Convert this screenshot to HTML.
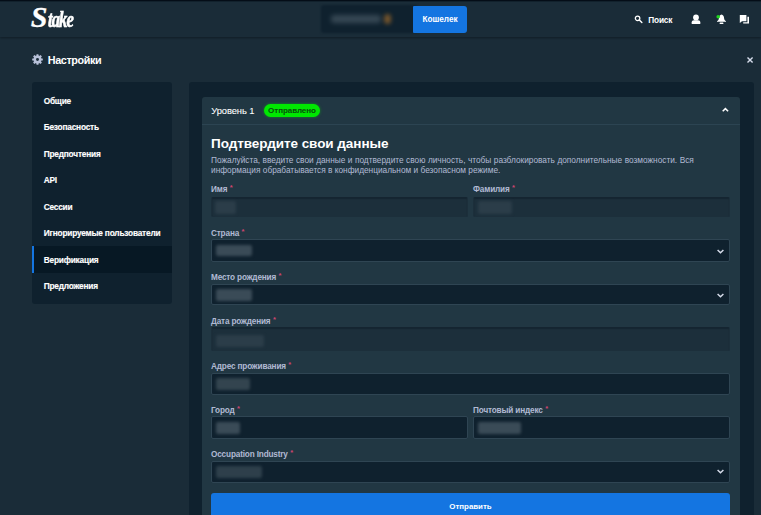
<!DOCTYPE html>
<html lang="ru">
<head>
<meta charset="utf-8">
<title>Stake</title>
<style>
*{box-sizing:border-box;margin:0;padding:0}
html,body{width:761px;height:515px;overflow:hidden;background:#1a2c38}
body{font-family:"Liberation Sans",sans-serif;color:#fff;position:relative}
.abs{position:absolute}
.t{white-space:nowrap}
.topline{left:0;top:0;width:761px;height:1px;background:#040d17;box-shadow:0 1px 0 rgba(4,13,23,.35)}
.header{left:0;top:0;width:761px;height:37px;background:#1a2c38;box-shadow:0 1px 2px rgba(5,12,18,.45)}
.logo{left:32px;top:0;height:36px;color:#fff;font-family:"Liberation Serif",serif;font-style:italic;font-weight:bold}
.balance{left:321px;top:5px;width:96px;height:28px;background:#0f212e;border-radius:3px 0 0 3px;filter:blur(1.2px)}
.wallet{left:413px;top:5.5px;width:54px;height:27.5px;background:#1475e1;border-radius:1px 3px 3px 1px;font-weight:bold;font-size:8.2px;line-height:28.4px;text-align:center;color:#fff}
.side{left:32px;top:81.5px;width:140px;height:222px;background:#0f212e;border-radius:3px}
.si{left:43.7px;font-weight:bold;font-size:8.3px;letter-spacing:-.2px;line-height:12px;color:#fff;-webkit-text-stroke:.15px #fff}
.card{left:188.6px;top:81.5px;width:565.9px;height:450px;background:#0f212e;border-radius:3px 3px 0 0}
.panel{left:201.5px;top:97.3px;width:538.8px;height:430px;background:#213743;border-radius:3px 3px 0 0}
.phead{left:201.5px;top:97.3px;width:538.8px;height:27.5px;border-bottom:1px solid #2c4452;border-radius:3px 3px 0 0}
.lbl{font-size:8.2px;letter-spacing:-.15px;line-height:12px;color:#b1bad3;font-weight:bold}
.lbl i{font-style:normal;color:#cf4570;margin-left:.3px;font-size:7.6px;position:relative;top:-1.8px}
.inp{background:#0f212e;border:1px solid #2f4553;border-radius:2px}
.inp.dis{background:#1c2f3b;border-color:#1c2f3b;border-top-color:#152531;box-shadow:inset 0 1px 1px rgba(8,18,28,.3)}
.bl{filter:blur(1.6px);border-radius:2px}
</style>
</head>
<body>
<div class="abs header"></div>
<div class="abs topline"></div>
<div class="abs logo t"><span style="position:absolute;left:-1.2px;top:2.3px;font-size:30px;line-height:30px;-webkit-text-stroke:.3px #fff">S</span><span style="position:absolute;left:16.3px;top:8.7px;font-size:24px;line-height:21px;letter-spacing:-1.3px;transform:scaleX(.69);transform-origin:0 0;-webkit-text-stroke:.7px #fff">take</span></div>
<div class="abs balance"></div>
<div class="abs" style="left:331px;top:14.5px;width:50px;height:8px;background:#51626e;opacity:.6;border-radius:3px;filter:blur(2.5px)"></div>
<div class="abs" style="left:383.5px;top:13.5px;width:7.5px;height:10px;background:#b8772b;opacity:.6;border-radius:5px;filter:blur(2px)"></div>
<div class="abs wallet t">Кошелек</div>
<svg class="abs" style="left:634.4px;top:15.2px" width="9" height="8.4" viewBox="0 0 10 10"><circle cx="3.9" cy="3.9" r="2.7" fill="none" stroke="#fff" stroke-width="1.5"/><path d="M6 6 L9 9" stroke="#fff" stroke-width="1.7" stroke-linecap="round"/></svg>
<div class="abs t" style="left:648.2px;top:14.1px;font-weight:bold;font-size:8.3px;letter-spacing:-.15px;line-height:12px">Поиск</div>
<svg class="abs" style="left:691px;top:14px" width="10" height="10" viewBox="0 0 10 10"><circle cx="5" cy="3.5" r="2.9" fill="#fff"/><path d="M0.7 10 V8.3 C0.7 7 1.6 6.3 2.9 6.3 H7.1 C8.4 6.3 9.3 7 9.3 8.3 V10 Z" fill="#fff"/></svg>
<svg class="abs" style="left:715px;top:13px" width="12" height="12" viewBox="0 0 12 12"><path d="M6.5 1.6 C4.9 1.9 4 3.4 3.9 5.2 C3.8 6.8 3.1 7.6 2 8.1 L2 8.8 L11 8.8 L11 8.1 C9.9 7.6 9.2 6.8 9.1 5.2 C9 3.4 8.1 1.9 6.5 1.6 Z" fill="#fff"/><rect x="4.6" y="9.6" width="3.8" height="1.5" rx=".5" fill="#fff"/><circle cx="3.2" cy="3.7" r="1.8" fill="#1fd51f"/></svg>
<svg class="abs" style="left:739px;top:14px" width="11" height="11" viewBox="0 0 11 11"><path d="M0.8 1 H7.4 V7.2 H3 L0.8 9 Z" fill="#fff"/><path d="M8.4 2.8 H10 V9.6 H4.2 V8.3 H8.4 Z" fill="#fff"/></svg>
<svg class="abs" style="left:31.7px;top:53.7px" width="11" height="11" viewBox="0 0 12 12"><g fill="#b7c0d8"><circle cx="6" cy="6" r="4.3"/><rect x="4.8" y="0.2" width="2.4" height="11.6" rx=".5"/><rect x="4.8" y="0.2" width="2.4" height="11.6" rx=".5" transform="rotate(45 6 6)"/><rect x="4.8" y="0.2" width="2.4" height="11.6" rx=".5" transform="rotate(90 6 6)"/><rect x="4.8" y="0.2" width="2.4" height="11.6" rx=".5" transform="rotate(135 6 6)"/></g><circle cx="6" cy="6" r="1.6" fill="#1a2c38"/></svg>
<div class="abs t" style="left:47.8px;top:52.6px;font-weight:bold;font-size:10.8px;letter-spacing:-.39px;line-height:14px">Настройки</div>
<svg class="abs" style="left:746px;top:56px" width="8" height="8" viewBox="0 0 8 8"><path d="M1.5 1.5 L6.6 6.6 M6.6 1.5 L1.5 6.6" stroke="#d5dceb" stroke-width="1.4"/></svg>
<div class="abs side"></div>
<div class="abs" style="left:32px;top:246px;width:140px;height:26.5px;background:#071824;border-left:2px solid #1475e1"></div>
<div class="abs si t" style="top:94.5px">Общие</div>
<div class="abs si t" style="top:121.0px">Безопасность</div>
<div class="abs si t" style="top:147.5px">Предпочтения</div>
<div class="abs si t" style="top:174.0px">API</div>
<div class="abs si t" style="top:200.5px">Сессии</div>
<div class="abs si t" style="top:227.0px">Игнорируемые пользователи</div>
<div class="abs si t" style="top:253.5px">Верификация</div>
<div class="abs si t" style="top:280.0px">Предложения</div>
<div class="abs card"></div>
<div class="abs panel"></div>
<div class="abs phead"></div>
<div class="abs t" style="left:211.3px;top:104.7px;font-size:9.4px;letter-spacing:-.1px;line-height:12px;color:#fff;-webkit-text-stroke:.08px #fff">Уровень 1</div>
<div class="abs t" style="left:264px;top:104.4px;width:56px;height:12.6px;border-radius:7px;background:#00e701;color:#07500c;font-weight:bold;font-size:8px;letter-spacing:-.05px;line-height:13.6px;text-align:center;box-shadow:0 0 3px rgba(0,231,1,.5)">Отправлено</div>
<svg class="abs" style="left:721px;top:106px" width="9" height="7" viewBox="0 0 9 7"><path d="M1.7 5.3 L4.4 2.6 L7.1 5.3" fill="none" stroke="#fff" stroke-width="1.5"/></svg>
<div class="abs t" style="left:211px;top:133.7px;font-weight:bold;font-size:13.5px;letter-spacing:-.05px;line-height:20px">Подтвердите свои данные</div>
<div class="abs" style="left:211px;top:156px;width:520px;font-size:8.3px;line-height:9.6px;color:#b1bad3"><span style="word-spacing:.17px">Пожалуйста, введите свои данные и подтвердите свою личность, чтобы разблокировать дополнительные возможности. Вся</span><br>информация обрабатывается в конфиденциальном и безопасном режиме.</div>
<div class="abs lbl t" style="left:211px;top:184px">Имя <i>*</i></div>
<div class="abs lbl t" style="left:473px;top:184px">Фамилия <i>*</i></div>
<div class="abs inp dis" style="left:211px;top:196.6px;width:257px;height:20.6px"></div>
<div class="abs inp dis" style="left:473px;top:196.6px;width:257px;height:20.6px"></div>
<div class="abs bl" style="left:215px;top:201px;width:21.0px;height:13.0px;background:#2b3d49;opacity:1"></div>
<div class="abs bl" style="left:478px;top:201px;width:34.0px;height:13.0px;background:#2b3d49;opacity:1"></div>
<div class="abs lbl t" style="left:211px;top:228px">Страна <i>*</i></div>
<div class="abs inp" style="left:211px;top:239.3px;width:519px;height:22.8px"></div>
<svg class="abs" style="left:716.2px;top:247.5px" width="9" height="7" viewBox="0 0 9 7"><path d="M1.6 2 L4.5 4.7 L7.4 2" fill="none" stroke="#d6dcea" stroke-width="1.5"/></svg>
<div class="abs bl" style="left:216px;top:245px;width:36.0px;height:11.0px;background:#3a4b57;opacity:1"></div>
<div class="abs lbl t" style="left:211px;top:272px">Место рождения <i>*</i></div>
<div class="abs inp" style="left:211px;top:283.8px;width:519px;height:21.1px"></div>
<svg class="abs" style="left:716.2px;top:291.5px" width="9" height="7" viewBox="0 0 9 7"><path d="M1.6 2 L4.5 4.7 L7.4 2" fill="none" stroke="#d6dcea" stroke-width="1.5"/></svg>
<div class="abs bl" style="left:215.5px;top:288.5px;width:36.0px;height:12.0px;background:#3a4b57;opacity:1"></div>
<div class="abs lbl t" style="left:211px;top:316px">Дата рождения <i>*</i></div>
<div class="abs inp dis" style="left:211px;top:326.9px;width:519px;height:23.9px"></div>
<div class="abs bl" style="left:216px;top:335px;width:48.0px;height:12.0px;background:#2b3d49;opacity:1"></div>
<div class="abs lbl t" style="left:211px;top:361px">Адрес проживания <i>*</i></div>
<div class="abs inp" style="left:211px;top:372.8px;width:519px;height:22px"></div>
<div class="abs bl" style="left:215.5px;top:378px;width:34.5px;height:12.0px;background:#33444f;opacity:1"></div>
<div class="abs lbl t" style="left:211px;top:405px">Город <i>*</i></div>
<div class="abs lbl t" style="left:473px;top:405px">Почтовый индекс <i>*</i></div>
<div class="abs inp" style="left:211px;top:416.1px;width:257px;height:23px"></div>
<div class="abs inp" style="left:473px;top:416.1px;width:257px;height:23px"></div>
<div class="abs bl" style="left:216px;top:421.5px;width:24.0px;height:12.0px;background:#3a4b57;opacity:1"></div>
<div class="abs bl" style="left:478px;top:421.5px;width:43.0px;height:12.0px;background:#3a4b57;opacity:1"></div>
<div class="abs lbl t" style="left:211px;top:449px">Occupation Industry <i>*</i></div>
<div class="abs inp" style="left:211px;top:461px;width:519px;height:21.5px"></div>
<svg class="abs" style="left:716.2px;top:467.9px" width="9" height="7" viewBox="0 0 9 7"><path d="M1.6 2 L4.5 4.7 L7.4 2" fill="none" stroke="#d6dcea" stroke-width="1.5"/></svg>
<div class="abs bl" style="left:216px;top:466px;width:46.0px;height:12.0px;background:#2e3f4b;opacity:1"></div>
<div class="abs t" style="left:211px;top:493px;width:519px;height:30px;background:#1475e1;border-radius:3px 3px 0 0;font-weight:bold;font-size:7.9px;line-height:28.6px;text-align:center;color:#fff">Отправить</div>
</body>
</html>
